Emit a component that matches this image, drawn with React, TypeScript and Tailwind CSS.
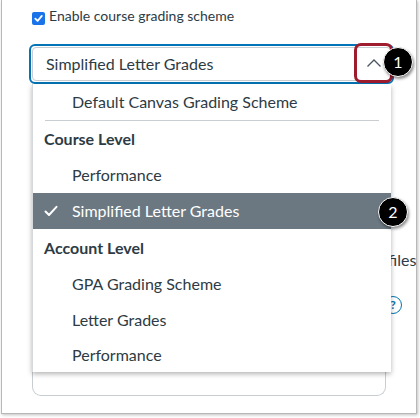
import React from "react";

const font = { fontFamily: "Lato, 'Open Sans', Arial, sans-serif" };

function Badge({ n }: { n: string }) {
  return (
    <div className="w-[30px] h-[30px] rounded-full bg-black border border-white shadow-[1px_2px_3px_rgba(0,0,0,0.45)] flex items-center justify-center text-white text-[16px] leading-none">
      {n}
    </div>
  );
}

function Item({ label, h = "h-[36px]" }: { label: string; h?: string }) {
  return (
    <div className={`${h} flex items-center pl-[39px] text-[16px] text-[#2d3b45]`}>{label}</div>
  );
}

function Group({ label, h = "h-[36px]" }: { label: string; h?: string }) {
  return (
    <div className={`${h} flex items-center pl-[11px] text-[16px] font-bold text-[#2d3b45]`}>{label}</div>
  );
}

export default function App() {
  return (
    <div className="w-[420px] h-[418px] bg-white overflow-hidden" style={font}>
      <div className="ml-[1px] w-[416px] h-[414px] bg-white border-x border-b border-[#b8b8b8] shadow-[1px_1px_3px_rgba(0,0,0,0.25)] relative overflow-hidden">
        {/* checkbox row */}
        <div className="flex items-start pl-[30px] pt-[8px] gap-[4px]">
          <div className="mt-[4px] w-[13px] h-[13px] rounded-[2px] bg-[#1a73e8] flex items-center justify-center">
            <svg width="11" height="11" viewBox="0 0 12 12">
              <path d="M2.5 6.2 L5 8.7 L9.6 3.2" fill="none" stroke="white" strokeWidth="2" strokeLinecap="round" strokeLinejoin="round" />
            </svg>
          </div>
          <span className="text-[14px] leading-[16px] text-[#2d3b45]">Enable course grading scheme</span>
        </div>

        {/* select */}
        <div className="ml-[27px] mt-[19px] w-[365px] h-[40px] rounded-[6px] border-2 border-[#0374b5] p-[1px]">
          <div className="h-full rounded-[4px] border border-[#c7cdd1] flex items-center pl-[13px] text-[16px] text-[#2d3b45]">
            Simplified Letter Grades
          </div>
        </div>

        {/* content behind menu */}
        <div className="flex ml-[30px] mt-[17px]">
          <div className="shrink-0 w-[354px] h-[295px] rounded-b-[9px] border border-[#c7cdd1] border-t-0" />
          <div className="flex flex-col pl-[2px]">
            <span className="mt-[149px] text-[16px] leading-[20px] text-[#2d3b45] whitespace-nowrap">files</span>
            <div className="mt-[26px] -ml-[4px] w-[18px] h-[18px] rounded-full border-[1.5px] border-[#0374b5] flex items-center justify-center text-[12px] font-bold text-[#0374b5] leading-none">
              ?
            </div>
          </div>
        </div>

        {/* red annotation box */}
        <div className="absolute left-[352px] top-[43px] w-[39px] h-[40px] rounded-[7px] border-[3px] border-[#9f1c2e] flex items-center justify-center">
          <svg width="16" height="10" viewBox="0 0 16 10">
            <path d="M1.5 8.5 L8 2 L14.5 8.5" fill="none" stroke="#4a5560" strokeWidth="1.3" />
          </svg>
        </div>
        <div className="absolute left-[381px] top-[47px]">
          <Badge n="1" />
        </div>

        {/* dropdown menu */}
        <div className="absolute left-[30px] top-[84px] w-[359px] bg-white border-l border-[#d5d9dc] shadow-[0_2px_5px_rgba(0,0,0,0.3)]">
          <Item label="Default Canvas Grading Scheme" />
          <div className="mx-[12px] h-px bg-[#c7cdd1]" />
          <Group label="Course Level" />
          <Item label="Performance" />
          <div className="h-[36px] flex items-center bg-[#6b7882] text-white text-[16px]">
            <svg className="ml-[11px] mr-[14px]" width="14" height="12" viewBox="0 0 14 12">
              <path d="M1.5 6.5 L5 10 L12.5 1.8" fill="none" stroke="white" strokeWidth="2" strokeLinecap="round" strokeLinejoin="round" />
            </svg>
            Simplified Letter Grades
          </div>
          <Group label="Account Level" h="h-[37px]" />
          <Item label="GPA Grading Scheme" />
          <Item label="Letter Grades" />
          <Item label="Performance" h="h-[34px]" />
        </div>

        <div className="absolute left-[376px] top-[197px]">
          <Badge n="2" />
        </div>
      </div>
    </div>
  );
}
